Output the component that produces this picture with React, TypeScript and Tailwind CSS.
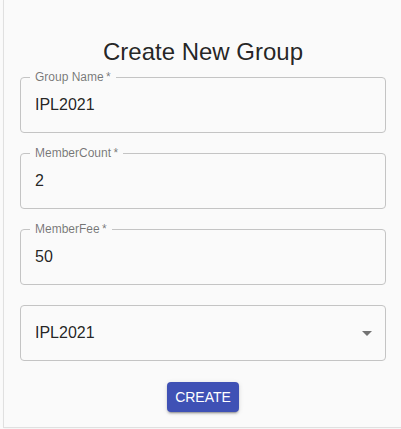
import React from "react";

function OutlinedField({ label, value }: { label?: string; value: string }) {
  return (
    <div className="relative h-[56px] rounded border border-[#c4c4c4] flex items-center pl-[14px] pr-[7px] justify-between">
      {label && (
        <span className="absolute left-[9px] top-[-8px] px-[5px] bg-[#fafafa] text-[12px] leading-[14px] text-[rgba(0,0,0,0.54)]">
          {label}
          {"\u2009*"}
        </span>
      )}
      <span className="text-[16px] text-[rgba(0,0,0,0.87)]">{value}</span>
    </div>
  );
}

export default function App() {
  return (
    <div
      className="h-[429px] w-[401px] bg-[#fafafa] overflow-hidden"
      style={{ fontFamily: '"Liberation Sans", Arial, sans-serif' }}
    >
      <div className="ml-[3px] h-[428px] border-l border-b border-[#e0e0e0] shadow-[1px_0_2px_rgba(0,0,0,0.06)] pl-4 pr-[15px] pt-[36px]">
        {/* Title */}
        <h1 className="text-[24px] leading-[32px] text-center text-[rgba(0,0,0,0.87)] mb-[9px]">
          Create New Group
        </h1>

        {/* Form */}
        <div className="flex flex-col gap-[20px]">
          <OutlinedField label="Group Name" value="IPL2021" />
          <OutlinedField label="MemberCount" value="2" />
          <OutlinedField label="MemberFee" value="50" />

          <div className="h-[56px] rounded border border-[#c4c4c4] flex items-center justify-between pl-[14px] pr-[6px]">
            <span className="text-[16px] text-[rgba(0,0,0,0.87)]">IPL2021</span>
            <svg width="24" height="24" viewBox="0 0 24 24" className="fill-[rgba(0,0,0,0.54)]">
              <path d="M7 10l5 5 5-5z" />
            </svg>
          </div>
        </div>

        {/* Submit */}
        <div className="flex justify-center mt-[21px]">
          <button className="w-[72px] h-[30px] rounded bg-[#3f51b5] text-white text-[14px] uppercase shadow-[0_3px_1px_-2px_rgba(0,0,0,0.2),0_2px_2px_0_rgba(0,0,0,0.14),0_1px_5px_0_rgba(0,0,0,0.12)]">
            Create
          </button>
        </div>
      </div>
    </div>
  );
}
